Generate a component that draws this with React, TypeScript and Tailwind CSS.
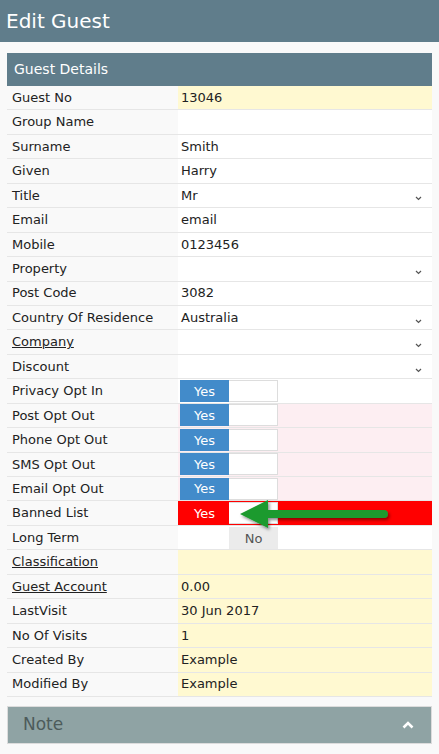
import React from "react";

type Row = {
  label: string;
  value?: string;
  kind?: "text" | "select" | "yes" | "banned" | "no";
  yellow?: boolean;
  link?: boolean;
  pink?: boolean;
};

const rows: Row[] = [
  { label: "Guest No", value: "13046", yellow: true },
  { label: "Group Name" },
  { label: "Surname", value: "Smith" },
  { label: "Given", value: "Harry" },
  { label: "Title", value: "Mr", kind: "select" },
  { label: "Email", value: "email" },
  { label: "Mobile", value: "0123456" },
  { label: "Property", kind: "select" },
  { label: "Post Code", value: "3082" },
  { label: "Country Of Residence", value: "Australia", kind: "select" },
  { label: "Company", kind: "select", link: true },
  { label: "Discount", kind: "select" },
  { label: "Privacy Opt In", kind: "yes" },
  { label: "Post Opt Out", kind: "yes", pink: true },
  { label: "Phone Opt Out", kind: "yes", pink: true },
  { label: "SMS Opt Out", kind: "yes", pink: true },
  { label: "Email Opt Out", kind: "yes", pink: true },
  { label: "Banned List", kind: "banned" },
  { label: "Long Term", kind: "no" },
  { label: "Classification", yellow: true, link: true },
  { label: "Guest Account", value: "0.00", yellow: true, link: true },
  { label: "LastVisit", value: "30 Jun 2017", yellow: true },
  { label: "No Of Visits", value: "1", yellow: true },
  { label: "Created By", value: "Example", yellow: true },
  { label: "Modified By", value: "Example", yellow: true },
];

function Chevron() {
  return (
    <svg width="7" height="5" viewBox="0 0 7 5" className="mr-[10px] mt-[7px]">
      <path d="M1 1l2.5 2.5L6 1" fill="none" stroke="#555" strokeWidth="1.2" />
    </svg>
  );
}

function Arrow() {
  return (
    <svg
      width="160"
      height="40"
      viewBox="0 0 160 40"
      className="absolute left-[56px] top-[-7px] pointer-events-none"
    >
      <defs>
        <filter id="sh" x="-10%" y="-30%" width="130%" height="180%">
          <feDropShadow dx="1.5" dy="2" stdDeviation="1.5" floodColor="#000" floodOpacity="0.45" />
        </filter>
      </defs>
      <g filter="url(#sh)">
        <path d="M6 20 L34 6 L34 16 L150 16 A4 4 0 0 1 150 24 L34 24 L34 34 Z" fill="#1e9a2f" />
      </g>
    </svg>
  );
}

function Value({ row }: { row: Row }) {
  const k = row.kind ?? "text";
  if (k === "yes" || k === "banned") {
    const banned = k === "banned";
    return (
      <div
        className={`flex-1 flex items-center relative ${
          banned ? "bg-[#ff0000]" : row.pink ? "bg-[#fdeef2]" : "bg-white"
        }`}
      >
        <div className="flex h-[22px] ml-[2px]">
          <div
            className={`w-[49px] flex items-center justify-center text-white pt-[1px] ${
              banned ? "bg-[#ff0000]" : "bg-[#428bca]"
            }`}
          >
            Yes
          </div>
          <div className="w-[49px] bg-white border border-l-0 border-[#dddddd]" />
        </div>
        {banned && <Arrow />}
      </div>
    );
  }
  if (k === "no") {
    return (
      <div className="flex-1 flex items-stretch bg-white">
        <div className="flex ml-[2px] mt-[1px]">
          <div className="w-[49px] bg-white" />
          <div className="w-[49px] bg-[#ebebeb] text-[#555] flex items-end justify-center pb-[1px]">No</div>
        </div>
      </div>
    );
  }
  return (
    <div
      className={`flex-1 flex items-center justify-between pl-[3px] ${
        row.yellow ? "bg-[#fff9d1]" : "bg-white"
      }`}
    >
      <span className="text-[#222]">{row.value ?? ""}</span>
      {k === "select" && <Chevron />}
    </div>
  );
}

export default function App() {
  return (
    <div
      className="w-[439px] h-[754px] overflow-hidden bg-[#f9f9f9] text-[13px]"
      style={{ fontFamily: '"DejaVu Sans", Verdana, sans-serif' }}
    >
      <div className="h-[42px] bg-[#607d8b] flex items-center px-[6px] text-white text-[20px]">
        Edit Guest
      </div>
      <div className="mx-[7px] mt-[11px]">
        <div className="h-[33px] bg-[#607d8b] flex items-center px-[7px] text-white text-[14px]">
          Guest Details
        </div>
        {rows.map((row) => (
          <div
            key={row.label}
            className="flex h-[24.44px] border-b border-[#e6e6e6]"
          >
            <div className="w-[171px] shrink-0 flex items-center pl-[5px] text-[#222] bg-[#f9f9f9]">
              <span className={row.link ? "underline" : ""}>{row.label}</span>
            </div>
            <Value row={row} />
          </div>
        ))}
        <div className="mt-[9px] h-[38px] bg-[#8fa3a4] border border-[#dcdcdc] flex items-center justify-between pl-[15px] pr-[17px]">
          <span className="text-[#4d5b5b] text-[17px]">Note</span>
          <svg width="12" height="8" viewBox="0 0 12 8">
            <path d="M1.5 6.5L6 2l4.5 4.5" fill="none" stroke="#fff" strokeWidth="2.6" />
          </svg>
        </div>
      </div>
    </div>
  );
}
